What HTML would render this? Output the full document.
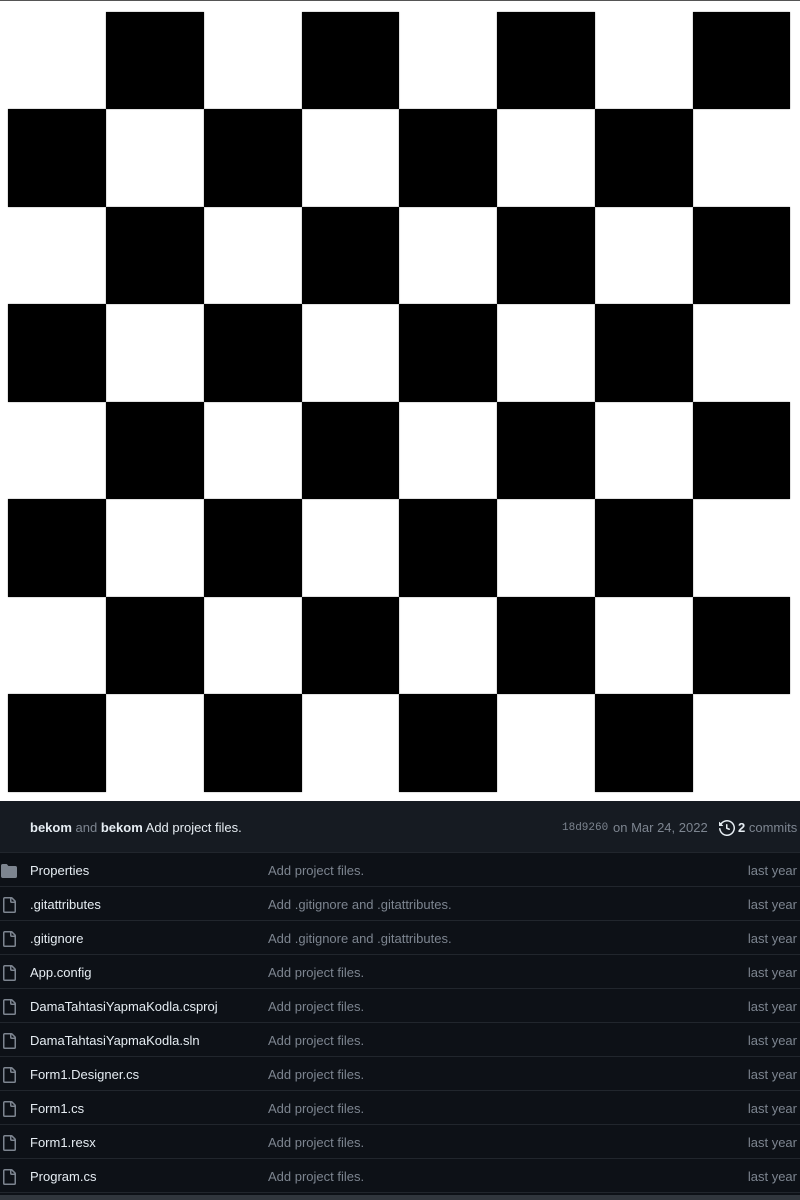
<!DOCTYPE html>
<html><head><meta charset="utf-8"><style>
*{margin:0;padding:0;box-sizing:border-box}
body{width:800px;height:1200px;background:#0d1117;overflow:hidden;font-family:"Liberation Sans",sans-serif;position:relative}
#img{position:absolute;left:0;top:0;width:800px;height:801px;background:#fff;border-top:1px solid #555}
.sq{position:absolute;width:98px;height:98px;background:#000;box-shadow:0 0 1px #666}
#hdr{position:absolute;top:801px;left:0;width:800px;height:52px;background:#161b22;border-bottom:1px solid #21262d;color:#e6edf3;font-size:13px}
.row{position:absolute;left:0;width:800px;height:34px;border-bottom:1px solid #21262d;font-size:13px;color:#e6edf3}
.row .n{position:absolute;left:30px;top:10px}
.row .m{position:absolute;left:268px;top:10px;color:#7d8590}
.row .t{position:absolute;right:3px;top:10px;color:#7d8590}
.row svg{position:absolute;left:1px;top:10px}
#foot{position:absolute;top:1195px;left:0;width:800px;height:5px;background:#30363d}
</style></head><body>
<div id="img">
<script>
var xs=[8,106,204,302,399,497,595,693],ys=[11,108,206,303,401,498,596,693],h='';
for(var r=0;r<8;r++)for(var c=0;c<8;c++)if((r+c)%2==1)h+='<div class="sq" style="left:'+xs[c]+'px;top:'+ys[r]+'px;width:'+((c<7?xs[c+1]:790)-xs[c])+'px;height:'+((r<7?ys[r+1]:791)-ys[r])+'px"></div>';
document.write(h);
</script>
</div>
<div id="hdr">
<span style="position:absolute;left:30px;top:19px"><b>bekom</b> <span style="color:#7d8590">and</span> <b>bekom</b> Add project files.</span>
<span style="position:absolute;left:562px;top:21px;font-family:'Liberation Mono',monospace;font-size:11px;color:#7d8590">18d9260</span>
<span style="position:absolute;left:613px;top:19px;color:#7d8590">on Mar 24, 2022</span>
<svg style="position:absolute;left:719px;top:19px" width="16" height="16" viewBox="0 0 16 16"><path fill="#e6edf3" d="M1.643 3.143.427 1.927A.25.25 0 0 0 0 2.104V5.75c0 .138.112.25.25.25h3.646a.25.25 0 0 0 .177-.427L2.715 4.215a6.5 6.5 0 1 1-1.18 4.458.75.75 0 1 0-1.493.154 8.001 8.001 0 1 0 1.6-5.684ZM7.75 4a.75.75 0 0 1 .75.75v2.992l2.028.812a.75.75 0 0 1-.557 1.392l-2.5-1A.751.751 0 0 1 7 8.250v-3.5A.75.75 0 0 1 7.75 4Z"/></svg>
<span style="position:absolute;left:738px;top:19px"><b>2</b> <span style="color:#7d8590">commits</span></span>
</div>
<script>
var files=[["Properties","Add project files.",1],[".gitattributes","Add .gitignore and .gitattributes."],[".gitignore","Add .gitignore and .gitattributes."],["App.config","Add project files."],["DamaTahtasiYapmaKodla.csproj","Add project files."],["DamaTahtasiYapmaKodla.sln","Add project files."],["Form1.Designer.cs","Add project files."],["Form1.cs","Add project files."],["Form1.resx","Add project files."],["Program.cs","Add project files."]];
var s='';
for(var i=0;i<files.length;i++){var f=files[i];
var ic=f[2]?'<svg width="16" height="16" viewBox="0 0 16 16"><path fill="#7d8590" d="M1.75 1A1.75 1.75 0 0 0 0 2.75v10.5C0 14.216.784 15 1.75 15h12.5A1.75 1.75 0 0 0 16 13.25v-8.5A1.75 1.75 0 0 0 14.25 3H7.5a.25.25 0 0 1-.2-.1l-.9-1.2C6.070 1.26 5.55 1 5 1H1.75Z"/></svg>':'<svg width="16" height="16" viewBox="0 0 16 16"><path fill="#7d8590" d="M2 1.75C2 .784 2.784 0 3.75 0h6.586c.464 0 .909.184 1.237.513l2.914 2.914c.329.328.513.773.513 1.237v9.586A1.75 1.75 0 0 1 13.25 16h-9.5A1.75 1.75 0 0 1 2 14.25Zm1.75-.25a.25.25 0 0 0-.25.25v12.5c0 .138.112.25.25.25h9.5a.25.25 0 0 0 .25-.25V6h-2.75A1.75 1.75 0 0 1 9 4.25V1.5Zm6.75.062V4.25c0 .138.112.25.25.25h2.688l-.011-.013-2.914-2.914-.013-.011Z"/></svg>';
s+='<div class="row" style="top:'+(853+i*34)+'px">'+ic+'<span class="n">'+f[0]+'</span><span class="m">'+f[1]+'</span><span class="t">last year</span></div>';}
document.write(s);
</script>
<div id="foot"></div>
</body></html>
